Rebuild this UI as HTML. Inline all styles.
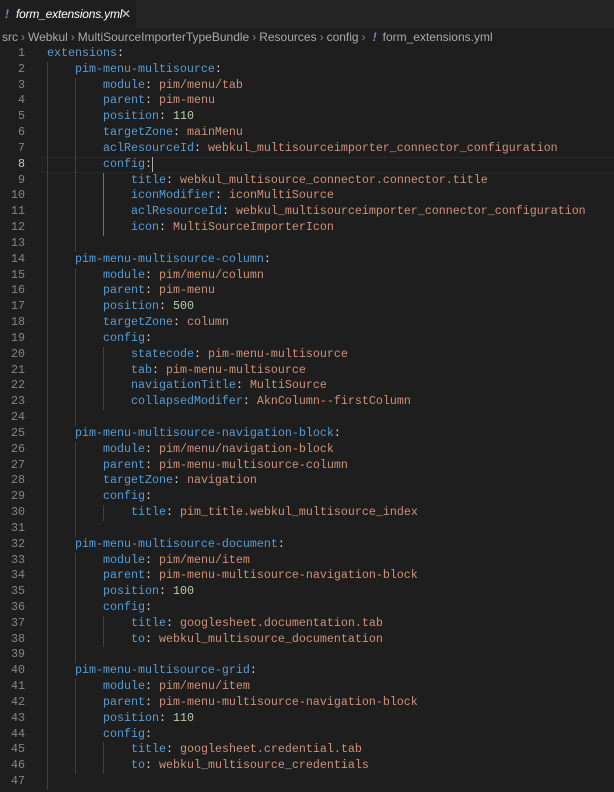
<!DOCTYPE html>
<html><head><meta charset="utf-8"><style>
body{margin:0;width:614px;height:792px;background:#1e1e1e;overflow:hidden;font-family:"Liberation Sans",sans-serif;position:relative}
.tabbar{position:absolute;left:0;top:0;width:614px;height:28px;background:#252526}
.tab{position:absolute;left:0;top:0;width:136px;height:28px;background:#1e1e1e;color:#ffffff;font-size:12px;font-style:italic;line-height:28px;white-space:nowrap}
.tab .ex{position:absolute;left:5px;color:#a074c4;font-weight:bold}
.tab .nm{position:absolute;left:16px;letter-spacing:-0.2px}
.tab .x{position:absolute;left:121px;font-style:normal;color:#ccc;font-size:12px}
.bc{position:absolute;left:2px;top:28px;height:19px;line-height:19px;font-size:12px;color:#a9a9a9;white-space:nowrap}
.bc .s{color:#888;margin:0 3px}
.bc .ex{color:#a074c4;font-weight:bold;font-style:italic;margin:0 6px 0 4px}
.code{position:absolute;left:0;top:46px;width:614px;font-family:"Liberation Mono",monospace;font-size:11.67px;line-height:15.84px}
.l{height:15.84px;position:relative}
.n{position:absolute;left:0;width:25px;text-align:right;color:#858585}
.c{position:absolute;left:47px;white-space:pre}
.g{display:inline-block;width:28px;height:15.84px;vertical-align:top;box-shadow:inset 1px 0 0 #404040}
.ga{box-shadow:inset 1px 0 0 #707070}
.k{color:#569cd6}.p{color:#d4d4d4}.v{color:#ce9178}.d{color:#b5cea8}
.cur{position:absolute;left:42px;width:572px;height:14px;top:0;border:1px solid #282828}
.cursor{display:inline-block;width:1px;height:15px;background:#aeafad;vertical-align:top}
.on{color:#c6c6c6}
</style></head><body>
<div class="tabbar"><div class="tab"><span class="ex">!</span><span class="nm">form_extensions.yml</span><span class="x">✕</span></div></div>
<div class="bc">src<span class="s">›</span>Webkul<span class="s">›</span>MultiSourceImporterTypeBundle<span class="s">›</span>Resources<span class="s">›</span>config<span class="s">›</span><span class="ex">!</span>form_extensions.yml</div>
<div class="code"><div class="l"><span class="n">1</span><span class="c"><span class="k">extensions</span><span class="p">:</span></span></div><div class="l"><span class="n">2</span><span class="c"><span class="g"></span><span class="k">pim-menu-multisource</span><span class="p">:</span></span></div><div class="l"><span class="n">3</span><span class="c"><span class="g"></span><span class="g"></span><span class="k">module</span><span class="p">: </span><span class="v">pim/menu/tab</span></span></div><div class="l"><span class="n">4</span><span class="c"><span class="g"></span><span class="g"></span><span class="k">parent</span><span class="p">: </span><span class="v">pim-menu</span></span></div><div class="l"><span class="n">5</span><span class="c"><span class="g"></span><span class="g"></span><span class="k">position</span><span class="p">: </span><span class="d">110</span></span></div><div class="l"><span class="n">6</span><span class="c"><span class="g"></span><span class="g"></span><span class="k">targetZone</span><span class="p">: </span><span class="v">mainMenu</span></span></div><div class="l"><span class="n">7</span><span class="c"><span class="g"></span><span class="g"></span><span class="k">aclResourceId</span><span class="p">: </span><span class="v">webkul_multisourceimporter_connector_configuration</span></span></div><div class="l"><div class="cur"></div><span class="n on">8</span><span class="c"><span class="g"></span><span class="g"></span><span class="k">config</span><span class="p">:</span><span class="cursor"></span></span></div><div class="l"><span class="n">9</span><span class="c"><span class="g"></span><span class="g"></span><span class="g ga"></span><span class="k">title</span><span class="p">: </span><span class="v">webkul_multisource_connector.connector.title</span></span></div><div class="l"><span class="n">10</span><span class="c"><span class="g"></span><span class="g"></span><span class="g ga"></span><span class="k">iconModifier</span><span class="p">: </span><span class="v">iconMultiSource</span></span></div><div class="l"><span class="n">11</span><span class="c"><span class="g"></span><span class="g"></span><span class="g ga"></span><span class="k">aclResourceId</span><span class="p">: </span><span class="v">webkul_multisourceimporter_connector_configuration</span></span></div><div class="l"><span class="n">12</span><span class="c"><span class="g"></span><span class="g"></span><span class="g ga"></span><span class="k">icon</span><span class="p">: </span><span class="v">MultiSourceImporterIcon</span></span></div><div class="l"><span class="n">13</span><span class="c"><span class="g"></span><span class="g"></span></span></div><div class="l"><span class="n">14</span><span class="c"><span class="g"></span><span class="k">pim-menu-multisource-column</span><span class="p">:</span></span></div><div class="l"><span class="n">15</span><span class="c"><span class="g"></span><span class="g"></span><span class="k">module</span><span class="p">: </span><span class="v">pim/menu/column</span></span></div><div class="l"><span class="n">16</span><span class="c"><span class="g"></span><span class="g"></span><span class="k">parent</span><span class="p">: </span><span class="v">pim-menu</span></span></div><div class="l"><span class="n">17</span><span class="c"><span class="g"></span><span class="g"></span><span class="k">position</span><span class="p">: </span><span class="d">500</span></span></div><div class="l"><span class="n">18</span><span class="c"><span class="g"></span><span class="g"></span><span class="k">targetZone</span><span class="p">: </span><span class="v">column</span></span></div><div class="l"><span class="n">19</span><span class="c"><span class="g"></span><span class="g"></span><span class="k">config</span><span class="p">:</span></span></div><div class="l"><span class="n">20</span><span class="c"><span class="g"></span><span class="g"></span><span class="g"></span><span class="k">statecode</span><span class="p">: </span><span class="v">pim-menu-multisource</span></span></div><div class="l"><span class="n">21</span><span class="c"><span class="g"></span><span class="g"></span><span class="g"></span><span class="k">tab</span><span class="p">: </span><span class="v">pim-menu-multisource</span></span></div><div class="l"><span class="n">22</span><span class="c"><span class="g"></span><span class="g"></span><span class="g"></span><span class="k">navigationTitle</span><span class="p">: </span><span class="v">MultiSource</span></span></div><div class="l"><span class="n">23</span><span class="c"><span class="g"></span><span class="g"></span><span class="g"></span><span class="k">collapsedModifer</span><span class="p">: </span><span class="v">AknColumn--firstColumn</span></span></div><div class="l"><span class="n">24</span><span class="c"><span class="g"></span><span class="g"></span></span></div><div class="l"><span class="n">25</span><span class="c"><span class="g"></span><span class="k">pim-menu-multisource-navigation-block</span><span class="p">:</span></span></div><div class="l"><span class="n">26</span><span class="c"><span class="g"></span><span class="g"></span><span class="k">module</span><span class="p">: </span><span class="v">pim/menu/navigation-block</span></span></div><div class="l"><span class="n">27</span><span class="c"><span class="g"></span><span class="g"></span><span class="k">parent</span><span class="p">: </span><span class="v">pim-menu-multisource-column</span></span></div><div class="l"><span class="n">28</span><span class="c"><span class="g"></span><span class="g"></span><span class="k">targetZone</span><span class="p">: </span><span class="v">navigation</span></span></div><div class="l"><span class="n">29</span><span class="c"><span class="g"></span><span class="g"></span><span class="k">config</span><span class="p">:</span></span></div><div class="l"><span class="n">30</span><span class="c"><span class="g"></span><span class="g"></span><span class="g"></span><span class="k">title</span><span class="p">: </span><span class="v">pim_title.webkul_multisource_index</span></span></div><div class="l"><span class="n">31</span><span class="c"><span class="g"></span><span class="g"></span></span></div><div class="l"><span class="n">32</span><span class="c"><span class="g"></span><span class="k">pim-menu-multisource-document</span><span class="p">:</span></span></div><div class="l"><span class="n">33</span><span class="c"><span class="g"></span><span class="g"></span><span class="k">module</span><span class="p">: </span><span class="v">pim/menu/item</span></span></div><div class="l"><span class="n">34</span><span class="c"><span class="g"></span><span class="g"></span><span class="k">parent</span><span class="p">: </span><span class="v">pim-menu-multisource-navigation-block</span></span></div><div class="l"><span class="n">35</span><span class="c"><span class="g"></span><span class="g"></span><span class="k">position</span><span class="p">: </span><span class="d">100</span></span></div><div class="l"><span class="n">36</span><span class="c"><span class="g"></span><span class="g"></span><span class="k">config</span><span class="p">:</span></span></div><div class="l"><span class="n">37</span><span class="c"><span class="g"></span><span class="g"></span><span class="g"></span><span class="k">title</span><span class="p">: </span><span class="v">googlesheet.documentation.tab</span></span></div><div class="l"><span class="n">38</span><span class="c"><span class="g"></span><span class="g"></span><span class="g"></span><span class="k">to</span><span class="p">: </span><span class="v">webkul_multisource_documentation</span></span></div><div class="l"><span class="n">39</span><span class="c"><span class="g"></span><span class="g"></span></span></div><div class="l"><span class="n">40</span><span class="c"><span class="g"></span><span class="k">pim-menu-multisource-grid</span><span class="p">:</span></span></div><div class="l"><span class="n">41</span><span class="c"><span class="g"></span><span class="g"></span><span class="k">module</span><span class="p">: </span><span class="v">pim/menu/item</span></span></div><div class="l"><span class="n">42</span><span class="c"><span class="g"></span><span class="g"></span><span class="k">parent</span><span class="p">: </span><span class="v">pim-menu-multisource-navigation-block</span></span></div><div class="l"><span class="n">43</span><span class="c"><span class="g"></span><span class="g"></span><span class="k">position</span><span class="p">: </span><span class="d">110</span></span></div><div class="l"><span class="n">44</span><span class="c"><span class="g"></span><span class="g"></span><span class="k">config</span><span class="p">:</span></span></div><div class="l"><span class="n">45</span><span class="c"><span class="g"></span><span class="g"></span><span class="g"></span><span class="k">title</span><span class="p">: </span><span class="v">googlesheet.credential.tab</span></span></div><div class="l"><span class="n">46</span><span class="c"><span class="g"></span><span class="g"></span><span class="g"></span><span class="k">to</span><span class="p">: </span><span class="v">webkul_multisource_credentials</span></span></div><div class="l"><span class="n">47</span><span class="c"><span class="g"></span></span></div></div>
</body></html>
